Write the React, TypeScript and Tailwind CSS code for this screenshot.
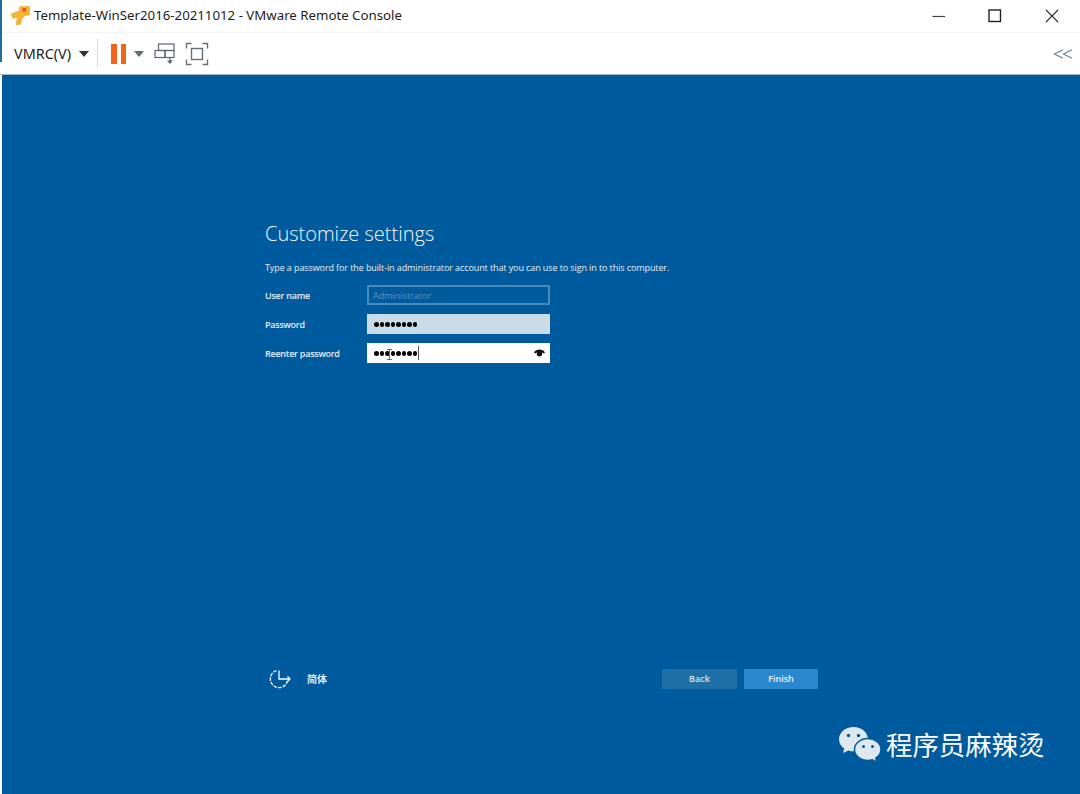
import React from "react";

const uiFont = "font-['Open_Sans','Noto_Sans_CJK_SC',sans-serif]";
const DOTS = [1, 2, 3, 4, 5, 6, 7, 8];

function AppIcon() {
    return (
        <svg width="20" height="20" viewBox="0 0 20 20">
            <path d="M1 8 L9 5 L10 0.5 H19.5 V9 L15 9.5 L12 12 L10.5 18.5 H6 L7.5 11 L3 12.5 Z" fill="#f5b52e" stroke="#e29c22" strokeWidth="0.5" />
            <rect x="12.5" y="2" width="3.5" height="3.5" fill="#e8541c" />
        </svg>
    );
}

function WindowButtons() {
    return (
        <div className="flex items-center">
            <svg width="14" height="14" viewBox="0 0 14 14" className="mr-[42px]">
                <path d="M0.5 7.5 H13" stroke="#444" strokeWidth="1.2" />
            </svg>
            <svg width="14" height="14" viewBox="0 0 14 14" className="mr-[43px]">
                <rect x="1" y="1" width="11.5" height="11.5" fill="none" stroke="#222" strokeWidth="1.4" />
            </svg>
            <svg width="14" height="14" viewBox="0 0 14 14" className="mr-[21px]">
                <path d="M1 1 L13 13 M13 1 L1 13" stroke="#333" strokeWidth="1.2" />
            </svg>
        </div>
    );
}

function Caret({ color }: { color: string }) {
    return (
        <svg width="10" height="6" viewBox="0 0 10 6">
            <path d="M0 0 H10 L5 6 Z" fill={color} />
        </svg>
    );
}

function SendKeysIcon() {
    return (
        <svg width="22" height="22" viewBox="0 0 22 22" fill="none" stroke="#5b6570" strokeWidth="1.2">
            <rect x="4.5" y="1" width="15.5" height="6.5" />
            <rect x="1" y="7.5" width="10" height="7" />
            <rect x="11" y="7.5" width="9" height="7" />
            <path d="M16 14.5 V19" />
            <path d="M13 17.5 H19 L16 21 Z" fill="#5b6570" stroke="none" />
        </svg>
    );
}

function FullscreenIcon() {
    return (
        <svg width="24" height="24" viewBox="0 0 24 24" fill="none" stroke="#66707a" strokeWidth="1.4">
            <path d="M1.5 6.5 V1.5 H6.5 M17.5 1.5 H22.5 V6.5 M22.5 17.5 V22.5 H17.5 M6.5 22.5 H1.5 V17.5" />
            <rect x="6.5" y="6.5" width="11" height="11" />
        </svg>
    );
}

function CollapseIcon() {
    return (
        <svg width="20" height="10" viewBox="0 0 20 10" fill="none" stroke="#6d8091" strokeWidth="1.2">
            <path d="M10 0.8 L1.5 5 L10 9.2" />
            <path d="M19 0.8 L10.5 5 L19 9.2" />
        </svg>
    );
}

function EyeIcon() {
    return (
        <svg width="11" height="8" viewBox="0 0 11 8">
            <path d="M0 3.4 C2.5 -0.4 8.5 -0.4 11 3.4 L9.7 4.6 C7.8 2.6 3.2 2.6 1.3 4.6 Z" fill="#111" />
            <circle cx="5.5" cy="4.8" r="2.7" fill="#111" />
        </svg>
    );
}

function LanguageIcon() {
    return (
        <svg width="22" height="22" viewBox="0 0 22 22" fill="none" stroke="#fff" strokeWidth="1.3">
            <path d="M7.5 2.65 A8.7 8.7 0 1 0 18.5 13" strokeDasharray="3.5 1.2" />
            <path d="M10 2.5 V11 H21" />
            <path d="M18.5 8.5 L21 11 L18.5 13.5" />
        </svg>
    );
}

function WeChatIcon() {
    return (
        <svg width="44" height="38" viewBox="0 0 44 38">
            <path d="M15.5 1 C7.5 1 1 6.5 1 13.2 C1 17 3 20.2 6.3 22.5 L5 27 L10.4 24.4 C12 25 13.8 25.3 15.5 25.3 C23.5 25.3 30 19.9 30 13.2 C30 6.5 23.5 1 15.5 1 Z" fill="#dfe7ef" />
            <path d="M30 12.5 C22.5 12.5 16.5 17.4 16.5 23.5 C16.5 29.6 22.5 34.5 30 34.5 C31.6 34.5 33 34.2 34.4 33.8 L38.8 36.5 L37.8 32 C40.8 30 43 27 43 23.5 C43 17.4 37 12.5 30 12.5 Z" fill="#dfe7ef" stroke="#005a9e" strokeWidth="1.5" />
            <circle cx="10.5" cy="9.5" r="1.7" fill="#005a9e" />
            <circle cx="20.5" cy="9.5" r="1.7" fill="#005a9e" />
            <circle cx="25.5" cy="20.5" r="1.5" fill="#005a9e" />
            <circle cx="34.5" cy="20.5" r="1.5" fill="#005a9e" />
        </svg>
    );
}

function Dots() {
    return (
        <div className="flex gap-[1px] pt-px">
            {DOTS.map((i) => (
                <span key={i} className="h-[4.5px] w-[4.5px] rounded-full bg-black" />
            ))}
        </div>
    );
}

function IBeam() {
    return (
        <svg width="5" height="11" viewBox="0 0 5 11" fill="none" stroke="#6b6b6b" strokeWidth="1" className="absolute left-[20px] top-[6px]">
            <path d="M0 0.5 H5 M2.5 0.5 V10.5 M0 10.5 H5" />
        </svg>
    );
}

function Row(props: { label: string; children: React.ReactNode }) {
    return (
        <div className="flex h-[20px] items-center">
            <div className="w-[102px] pt-px text-[9px] font-semibold tracking-[-0.25px] text-[#e6eef5]">{props.label}</div>
            {props.children}
        </div>
    );
}

export default function App() {
    return (
        <div className={`relative flex h-[794px] w-[1080px] flex-col overflow-hidden bg-white ${uiFont}`}>
            <div className="absolute left-0 top-0 h-[62px] w-[2px] bg-[#1c6ea4]" />

            <div className="flex h-[33px] shrink-0 items-center justify-between border-b border-[#f4f4f4] pl-[10px]">
                <div className="flex items-center">
                    <AppIcon />
                    <span className="ml-[4px] text-[13.25px] text-[#1d1d1d] font-['Noto_Sans',sans-serif]">
                        Template-WinSer2016-20211012 - VMware Remote Console
                    </span>
                </div>
                <WindowButtons />
            </div>

            <div className="flex h-[42px] shrink-0 items-center border-b border-[#a3b6c6] pl-[14px] pr-[7px]">
                <span className="text-[14.4px] text-[#222] font-['Noto_Sans',sans-serif]">VMRC(V)</span>
                <span className="ml-[8px]"><Caret color="#333" /></span>
                <div className="ml-[8px] h-[29px] w-px bg-[#dcdcdc]" />
                <div className="ml-[13px] flex gap-[4px]">
                    <span className="h-[20px] w-[6px] bg-[#f4631e]" />
                    <span className="h-[20px] w-[5px] bg-[#f4631e]" />
                </div>
                <span className="ml-[8px]"><Caret color="#5f6b76" /></span>
                <span className="ml-[10px]"><SendKeysIcon /></span>
                <span className="ml-[9px]"><FullscreenIcon /></span>
                <span className="ml-auto"><CollapseIcon /></span>
            </div>

            <div className="flex flex-1 flex-col border-l-2 border-[#fff] bg-[#005a9e] pl-[263px]">
                <h1 className="mt-[143px] text-[20px] font-light leading-[32px] text-[#f4f8fb]">Customize settings</h1>
                <p className="mt-[11px] text-[9px] leading-[14px] tracking-[-0.1px] text-[#e6eef5]">
                    Type a password for the built-in administrator account that you can use to sign in to this computer.
                </p>
                <div className="mt-[10px] flex flex-col gap-[9px]">
                    <Row label="User name">
                        <div className="flex h-[20px] w-[183px] items-center border-2 border-[#4a8ab8] pl-[4px] pt-px text-[9px] text-[#5e93bd]">
                            Administrator
                        </div>
                    </Row>
                    <Row label="Password">
                        <div className="flex h-[20px] w-[183px] items-center bg-[#c9dde9] pl-[7px]">
                            <Dots />
                        </div>
                    </Row>
                    <Row label="Reenter password">
                        <div className="relative flex h-[20px] w-[183px] items-center bg-white pl-[7px] pr-[5px]">
                            <Dots />
                            <span className="ml-[1px] h-[14px] w-px bg-[#555]" />
                            <span className="ml-auto"><EyeIcon /></span>
                            <IBeam />
                        </div>
                    </Row>
                </div>

                <div className="mt-[306px] flex h-[20px] items-center">
                    <span className="ml-[4px]"><LanguageIcon /></span>
                    <span className="ml-[16px] text-[10px] font-semibold text-[#e6eef5]">简体</span>
                    <button className="ml-[335px] h-[20px] w-[75px] bg-[#1e6fa6] text-[9px] font-semibold text-[#dbe6ef]">Back</button>
                    <button className="ml-[7px] h-[20px] w-[74px] bg-[#2b88cf] text-[9px] font-semibold text-[#eef4f9]">Finish</button>
                </div>
            </div>

            <div className="absolute left-[838px] top-[726px] flex items-center">
                <WeChatIcon />
                <span className="ml-[4px] text-[26.4px] leading-[36px] text-white">程序员麻辣烫</span>
            </div>
        </div>
    );
}
